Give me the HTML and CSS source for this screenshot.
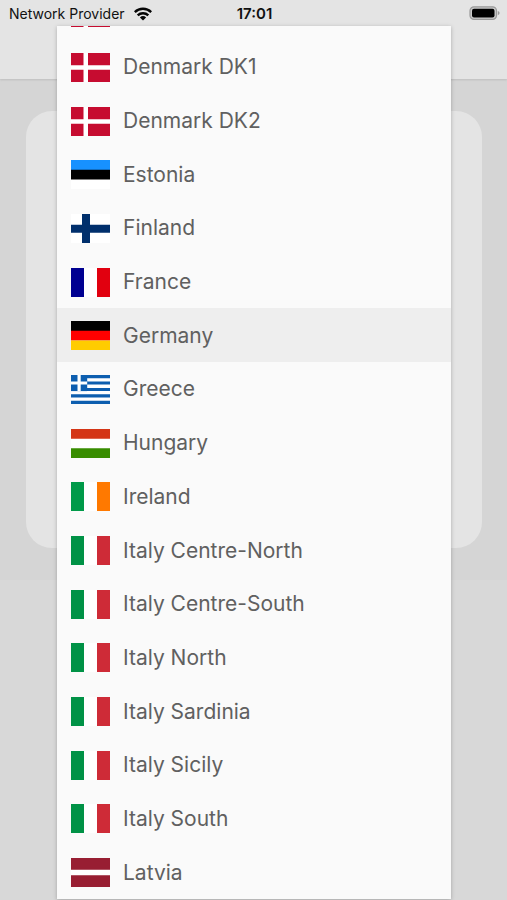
FILE: index.html
```html
<!DOCTYPE html>
<html lang="en">
<head>
<meta charset="utf-8">
<meta name="viewport" content="width=device-width, initial-scale=1">
<title>Select a country</title>
<link rel="stylesheet" href="styles.css">
</head>
<body>
<div class="screen">
  <header class="status">
    <div class="carrier">
      <span>Network Provider</span>
      <svg class="wifi" viewBox="0 0 18 14" aria-hidden="true"><g fill="none" stroke="#050505" stroke-width="2.4"><path d="M.8 5.1a11.7 11.7 0 0 1 16.4 0"/><path d="M3.7 8.4a7.6 7.6 0 0 1 10.6 0"/></g><path d="M5.9 10.4a4.5 4.5 0 0 1 6.2 0L9 13.6z" fill="#050505"/></svg>
    </div>
    <time>17:01</time>
    <svg class="battery" viewBox="0 0 31 14" aria-hidden="true"><rect x="1" y=".8" width="26.5" height="12.6" rx="4" fill="#c9c9c9" stroke="#999" stroke-width="1.2"/><rect x="3" y="2.8" width="22.5" height="8.6" rx="2" fill="#000"/><path d="M28.8 5q1.8.6 1.8 2.1t-1.8 2.1z" fill="#999"/></svg>
  </header>
  <main class="page">
    <section class="card"></section>
  </main>
  <div class="overlay">
    <ul class="menu" aria-label="Country">
      <li class="partial"><svg class="flag" viewBox="0 0 39 29" aria-hidden="true"><use href="#dk"/></svg></li>
      <li><button type="button"><svg class="flag" viewBox="0 0 39 29" aria-hidden="true"><g id="dk"><path fill="#fff" d="M0 0h39v29H0z"/><path fill="#c60c30" d="M0 0h12.5v12.3H0zM17 0h22v12.3H17zM0 16.8h12.5V29H0zM17 16.8h22V29H17z"/></g></svg>Denmark DK1</button></li>
      <li><button type="button"><svg class="flag" viewBox="0 0 39 29" aria-hidden="true"><use href="#dk"/></svg>Denmark DK2</button></li>
      <li><button type="button"><svg class="flag" viewBox="0 0 39 29" aria-hidden="true"><path fill="#fff" d="M0 0h39v29H0z"/><path fill="#1791ff" d="M0 0h39v10H0z"/><path d="M0 9.7h39v9.7H0z"/></svg>Estonia</button></li>
      <li><button type="button"><svg class="flag" viewBox="0 0 39 29" aria-hidden="true"><path fill="#fff" d="M0 0h39v29H0z"/><path fill="#002f6c" d="M0 10.7h39v8H0zM11 0h8v29h-8z"/></svg>Finland</button></li>
      <li><button type="button"><svg class="flag" viewBox="0 0 39 29" aria-hidden="true"><path fill="#fff" d="M0 0h39v29H0z"/><path fill="#000091" d="M0 0h13v29H0z"/><path fill="#e1000f" d="M26 0h13v29H26z"/></svg>France</button></li>
      <li><button type="button" class="selected" aria-pressed="true"><svg class="flag" viewBox="0 0 39 29" aria-hidden="true"><path d="M0 0h39v10H0z"/><path fill="#f00" d="M0 9.7h39v9.8H0z"/><path fill="#fc0" d="M0 19.4h39V29H0z"/></svg>Germany</button></li>
      <li><button type="button"><svg class="flag" viewBox="0 0 39 29" aria-hidden="true"><path fill="#fff" d="M0 0h39v29H0z"/><path fill="#0d5eaf" d="M0 0h39v3.2H0zM0 6.4h39v3.2H0zM0 12.9h39v3.2H0zM0 19.3h39v3.3H0zM0 25.8h39V29H0z"/><path fill="#0d5eaf" d="M0 0h16.2v16.1H0z"/><path fill="#fff" d="M6.5 0h3.2v16.1H6.5zM0 6.4h16.2v3.2H0z"/></svg>Greece</button></li>
      <li><button type="button"><svg class="flag" viewBox="0 0 39 29" aria-hidden="true"><path fill="#fff" d="M0 0h39v29H0z"/><path fill="#d43516" d="M0 0h39v9.7H0z"/><path fill="#388d00" d="M0 19.3h39V29H0z"/></svg>Hungary</button></li>
      <li><button type="button"><svg class="flag" viewBox="0 0 39 29" aria-hidden="true"><path fill="#fff" d="M0 0h39v29H0z"/><path fill="#009a49" d="M0 0h13v29H0z"/><path fill="#ff7900" d="M26 0h13v29H26z"/></svg>Ireland</button></li>
      <li><button type="button"><svg class="flag" viewBox="0 0 39 29" aria-hidden="true"><g id="it"><path fill="#fff" d="M0 0h39v29H0z"/><path fill="#009246" d="M0 0h13v29H0z"/><path fill="#ce2b37" d="M26 0h13v29H26z"/></g></svg>Italy Centre-North</button></li>
      <li><button type="button"><svg class="flag" viewBox="0 0 39 29" aria-hidden="true"><use href="#it"/></svg>Italy Centre-South</button></li>
      <li><button type="button"><svg class="flag" viewBox="0 0 39 29" aria-hidden="true"><use href="#it"/></svg>Italy North</button></li>
      <li><button type="button"><svg class="flag" viewBox="0 0 39 29" aria-hidden="true"><use href="#it"/></svg>Italy Sardinia</button></li>
      <li><button type="button"><svg class="flag" viewBox="0 0 39 29" aria-hidden="true"><use href="#it"/></svg>Italy Sicily</button></li>
      <li><button type="button"><svg class="flag" viewBox="0 0 39 29" aria-hidden="true"><use href="#it"/></svg>Italy South</button></li>
      <li><button type="button"><svg class="flag" viewBox="0 0 39 29" aria-hidden="true"><path fill="#fff" d="M0 0h39v29H0z"/><path fill="#981e32" d="M0 0h39v11.8H0zM0 17.2h39V29H0z"/></svg>Latvia</button></li>
    </ul>
  </div>
</div>
</body>
</html>
```
FILE: styles.css
```css
* {
  box-sizing: border-box;
}

body {
  margin: 0;
  font-family: Inter, "Liberation Sans", sans-serif;
  background: #d8d8d8;
}

.screen {
  position: relative;
  min-height: 100vh;
  overflow: hidden;
}

.status {
  display: grid;
  grid-template-columns: 1fr auto 1fr;
  align-items: start;
  height: 79px;
  padding: 4px 7px 0 9px;
  background: #e4e4e4;
  box-shadow: 0 1px 2px #bdbdbd;
  position: relative;
  color: #111;
  font-size: 14px;
  line-height: 20px;
}

.carrier {
  display: flex;
  align-items: center;
  gap: 9px;
}

.wifi {
  width: 18px;
  height: 14px;
}

.status time {
  font-size: 15px;
  font-weight: 600;
}

.battery {
  justify-self: end;
  width: 31px;
  height: 14px;
  margin-top: 2px;
}

.page {
  padding: 32px 25px 32px 26px;
  background: #d5d5d5;
}

.card {
  min-height: 437px;
  border-radius: 26px;
  background: #e4e4e4;
}

.overlay {
  position: absolute;
  inset: 26px 56px 1px 57px;
}

.menu {
  display: grid;
  grid-template-rows: 14px repeat(16, 1fr);
  height: 100%;
  margin: 0;
  padding: 0;
  list-style: none;
  background: #fafafa;
  box-shadow: 0 1px 4px rgba(0, 0, 0, 0.25);
}

.menu li {
  display: grid;
  min-height: 0;
}

.menu .partial {
  display: flex;
  align-items: end;
  overflow: hidden;
  padding: 0 14px 13px;
}

.menu button {
  display: flex;
  align-items: center;
  gap: 13px;
  min-width: 0;
  margin: 0;
  padding: 1px 14px 0;
  border: 0;
  background: transparent;
  color: #606060;
  font: 400 21px/28px Inter, "Liberation Sans", sans-serif;
  text-align: left;
}

.menu .selected {
  background: #eee;
}

.flag {
  flex: none;
  width: 39px;
  height: 29px;
}
```
